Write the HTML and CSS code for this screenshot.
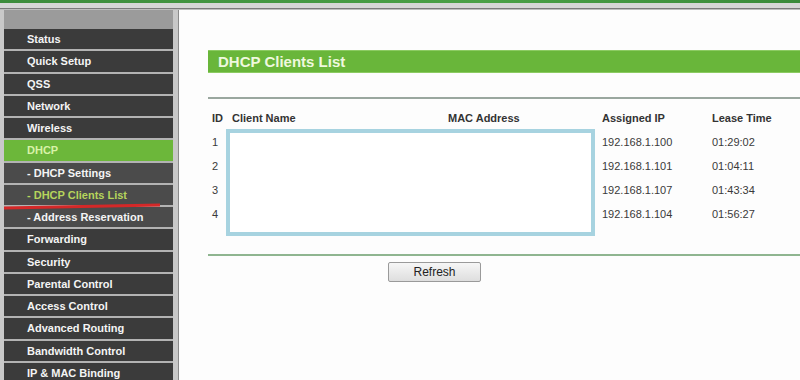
FILE: index.html
```html
<!DOCTYPE html>
<html>
<head>
<meta charset="utf-8">
<link rel="stylesheet" href="styles.css">
</head>
<body>
<div class="topbar"></div>
<div class="topstrip"></div>
<div class="main">
  <nav class="sidebar">
    <div class="side-head"></div>
    <div class="item">Status</div>
    <div class="item">Quick Setup</div>
    <div class="item">QSS</div>
    <div class="item">Network</div>
    <div class="item">Wireless</div>
    <div class="item active">DHCP</div>
    <div class="item sub">- DHCP Settings</div>
    <div class="item sub current">- DHCP Clients List</div>
    <div class="item sub">- Address Reservation</div>
    <div class="item">Forwarding</div>
    <div class="item">Security</div>
    <div class="item">Parental Control</div>
    <div class="item">Access Control</div>
    <div class="item">Advanced Routing</div>
    <div class="item">Bandwidth Control</div>
    <div class="item">IP &amp; MAC Binding</div>
    <svg class="redline" width="160" height="8" viewBox="0 0 160 8"><path d="M0 6 L156 3" stroke="#d42828" stroke-width="3" fill="none"/></svg>
  </nav>
  <section class="content">
    <div class="title">DHCP Clients List</div>
    <div class="rule"></div>
    <div class="table">
      <div class="row head"><span>ID</span><span>Client Name</span><span>MAC Address</span><span>Assigned IP</span><span>Lease Time</span></div>
      <div class="row"><span>1</span><span></span><span></span><span>192.168.1.100</span><span>01:29:02</span></div>
      <div class="row"><span>2</span><span></span><span></span><span>192.168.1.101</span><span>01:04:11</span></div>
      <div class="row"><span>3</span><span></span><span></span><span>192.168.1.107</span><span>01:43:34</span></div>
      <div class="row"><span>4</span><span></span><span></span><span>192.168.1.104</span><span>01:56:27</span></div>
      <div class="redact"></div>
    </div>
    <div class="rule2"></div>
    <div class="actions"><button class="btn">Refresh</button></div>
  </section>
</div>
</body>
</html>
```
FILE: styles.css
```css
html, body {
  margin: 0;
  padding: 0;
  width: 800px;
  height: 380px;
  overflow: hidden;
  background: #fdfdfd;
  font-family: "Liberation Sans", Arial, sans-serif;
}
.topbar {
  height: 3px;
  background: linear-gradient(90deg, #3c8c3c, #4aa046 60%, #3a8a3a);
}
.topstrip {
  height: 5px;
  background: #d6d6d6;
  border-bottom: 1px solid #7a7a7a;
  box-shadow: 0 1px 0 #bdbdbd;
  margin-bottom: 1px;
}
.main {
  display: flex;
  height: 370px;
}
.sidebar {
  position: relative;
  width: 169px;
  flex: none;
  border-left: 4px solid #c9c9c9;
  border-right: 5px solid #c8c8c8;
  box-shadow: 1px 0 0 #8a8a8a;
  background: #3d3d3d;
}
.side-head {
  height: 19px;
  background: #9b9b9b;
}
.item {
  height: 20.27px;
  line-height: 20px;
  border-bottom: 2px solid #b3b3b3;
  background: #3b3b3b;
  color: #f4f4f4;
  font-size: 11px;
  font-weight: bold;
  padding-left: 23px;
  white-space: nowrap;
}
.item.sub {
  background: #4b4b4b;
}
.item.active {
  background: #6cb73a;
  color: #d8f2a8;
}
.item.current {
  color: #b6d45c;
}
.redline {
  position: absolute;
  left: 0;
  top: 192px;
}
.content {
  flex: 1;
  padding: 40px 0 0 29px;
  margin-left: 1px;
  background: #fdfdfd;
}
.title {
  height: 23px;
  line-height: 22px;
  background: #69b63a;
  border-top: 1px solid #8ccb62;
  border-bottom: 1px solid #8ccb62;
  box-sizing: border-box;
  color: #eef8de;
  font-size: 15px;
  font-weight: bold;
  padding-left: 10px;
}
.rule {
  height: 2px;
  margin-top: 24px;
  background: #9aa79f;
}
.table {
  position: relative;
  margin: 7px 0 0 4px;
}
.row {
  display: grid;
  grid-template-columns: 20px 216px 154px 110px 1fr;
  height: 24px;
  line-height: 24px;
  font-size: 11px;
  color: #3a3a3a;
}
.row.head {
  font-weight: bold;
  color: #333;
}
.redact {
  position: absolute;
  left: 14px;
  top: 23px;
  width: 369px;
  height: 107px;
  box-sizing: border-box;
  border: 4px solid #a7d3e0;
  background: #ffffff;
}
.rule2 {
  height: 2px;
  margin-top: 28px;
  background: #8fb590;
}
.actions {
  padding: 6px 0 0 180px;
}
.btn {
  width: 93px;
  height: 20px;
  padding: 0;
  border: 1px solid #9a9a9a;
  border-radius: 2px;
  background: linear-gradient(#f6f6f6, #dedede);
  font-family: "Liberation Sans", Arial, sans-serif;
  font-size: 12px;
  color: #222;
}
```
